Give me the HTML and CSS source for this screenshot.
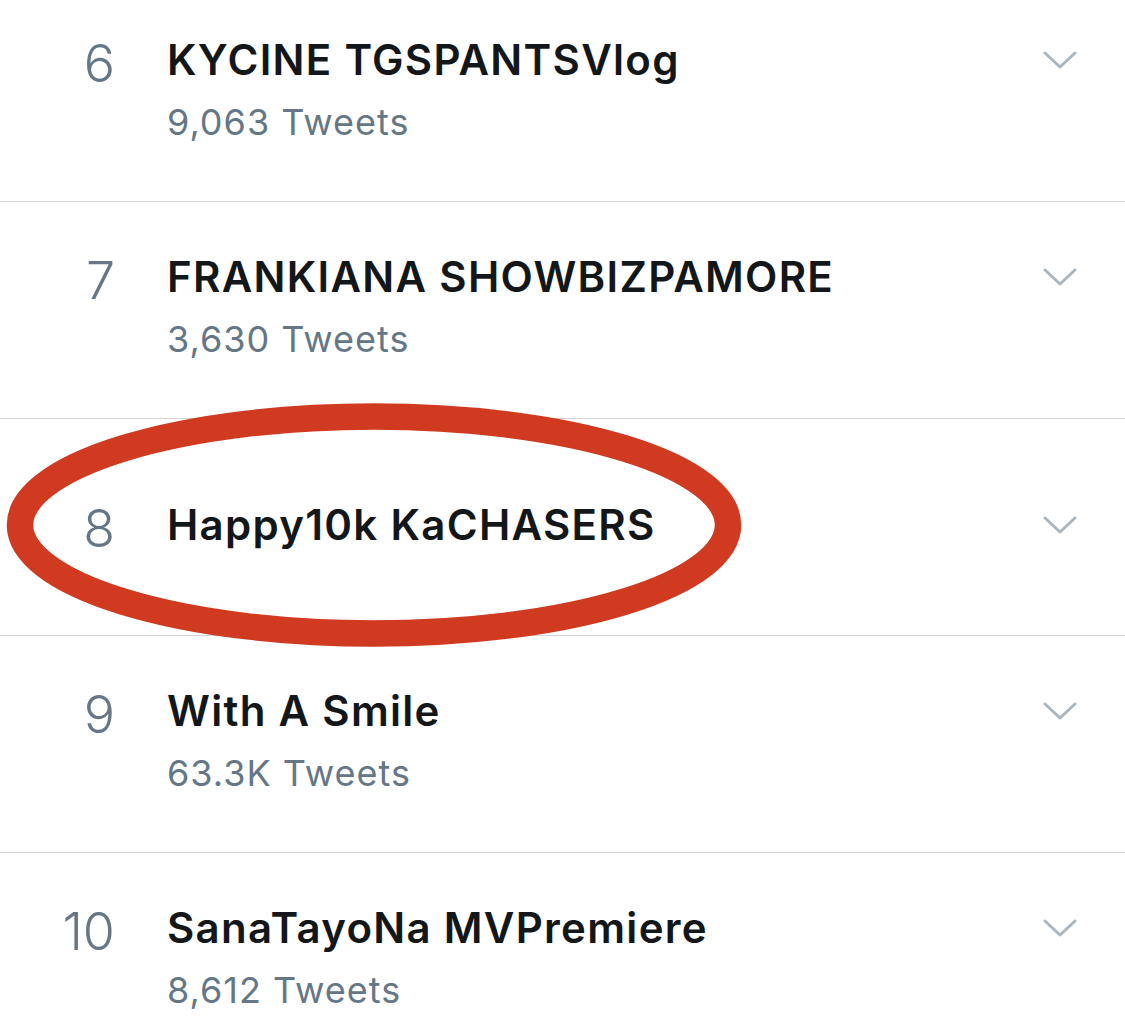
FILE: index.html
```html
<!DOCTYPE html>
<html lang="en">
<head>
<meta charset="utf-8">
<title>Trends</title>
<link rel="stylesheet" href="styles.css">
</head>
<body>
<div class="page">
  <ul class="trends">
    <li class="trend">
      <span class="rank">6</span>
      <div class="info">
        <div class="title">KYCINE TGSPANTSVlog</div>
        <div class="count">9,063 Tweets</div>
      </div>
      <svg class="chev" viewBox="0 0 34 48" width="34" height="48"><polyline points="2,17 17,31 32,17"/></svg>
    </li>
    <li class="trend">
      <span class="rank">7</span>
      <div class="info">
        <div class="title">FRANKIANA SHOWBIZPAMORE</div>
        <div class="count">3,630 Tweets</div>
      </div>
      <svg class="chev" viewBox="0 0 34 48" width="34" height="48"><polyline points="2,17 17,31 32,17"/></svg>
    </li>
    <li class="trend">
      <span class="rank">8</span>
      <div class="info">
        <div class="title">Happy10k KaCHASERS</div>
      </div>
      <svg class="chev" viewBox="0 0 34 48" width="34" height="48"><polyline points="2,17 17,31 32,17"/></svg>
    </li>
    <li class="trend">
      <span class="rank">9</span>
      <div class="info">
        <div class="title">With A Smile</div>
        <div class="count">63.3K Tweets</div>
      </div>
      <svg class="chev" viewBox="0 0 34 48" width="34" height="48"><polyline points="2,17 17,31 32,17"/></svg>
    </li>
    <li class="trend">
      <span class="rank">10</span>
      <div class="info">
        <div class="title">SanaTayoNa MVPremiere</div>
        <div class="count">8,612 Tweets</div>
      </div>
      <svg class="chev" viewBox="0 0 34 48" width="34" height="48"><polyline points="2,17 17,31 32,17"/></svg>
    </li>
  </ul>
  <svg class="circle" viewBox="0 0 1125 1030" width="1125" height="1030">
    <ellipse cx="374" cy="525" rx="354" ry="108.5"/>
  </svg>
</div>
</body>
</html>
```
FILE: styles.css
```css
html, body {
  margin: 0;
  padding: 0;
  background: #ffffff;
}
body {
  width: 1125px;
  height: 1030px;
  overflow: hidden;
  font-family: "Inter", "Roboto", "Liberation Sans", sans-serif;
}
.page {
  position: relative;
  width: 1125px;
  height: 1030px;
  overflow: hidden;
}
.trends {
  list-style: none;
  margin: -15px 0 0 0;
  padding: 0;
}
.trend {
  box-sizing: border-box;
  height: 217px;
  border-bottom: 1px solid #d4d4d6;
  display: grid;
  grid-template-columns: 115px 1fr 34px;
  column-gap: 52px;
  align-content: center;
  padding-right: 48px;
}
.rank {
  align-self: start;
  text-align: right;
  font-size: 52px;
  font-weight: 300;
  line-height: 48px;
  margin-top: 4px;
  color: #657786;
}
.info {
  min-width: 0;
}
.title {
  font-size: 42px;
  font-weight: 600;
  line-height: 48px;
  letter-spacing: 1.3px;
  color: #14171a;
  white-space: nowrap;
}
.count {
  margin-top: 18px;
  margin-bottom: 8px;
  font-size: 36px;
  font-weight: 400;
  line-height: 40px;
  letter-spacing: 1px;
  color: #657786;
  white-space: nowrap;
}
.chev {
  align-self: start;
  display: block;
}
.chev polyline {
  fill: none;
  stroke: #aab5be;
  stroke-width: 3;
  stroke-linecap: round;
  stroke-linejoin: round;
}
.circle {
  position: absolute;
  left: 0;
  top: 0;
  pointer-events: none;
}
.circle ellipse {
  fill: none;
  stroke: #cf3a21;
  stroke-width: 26.5;
}
```
